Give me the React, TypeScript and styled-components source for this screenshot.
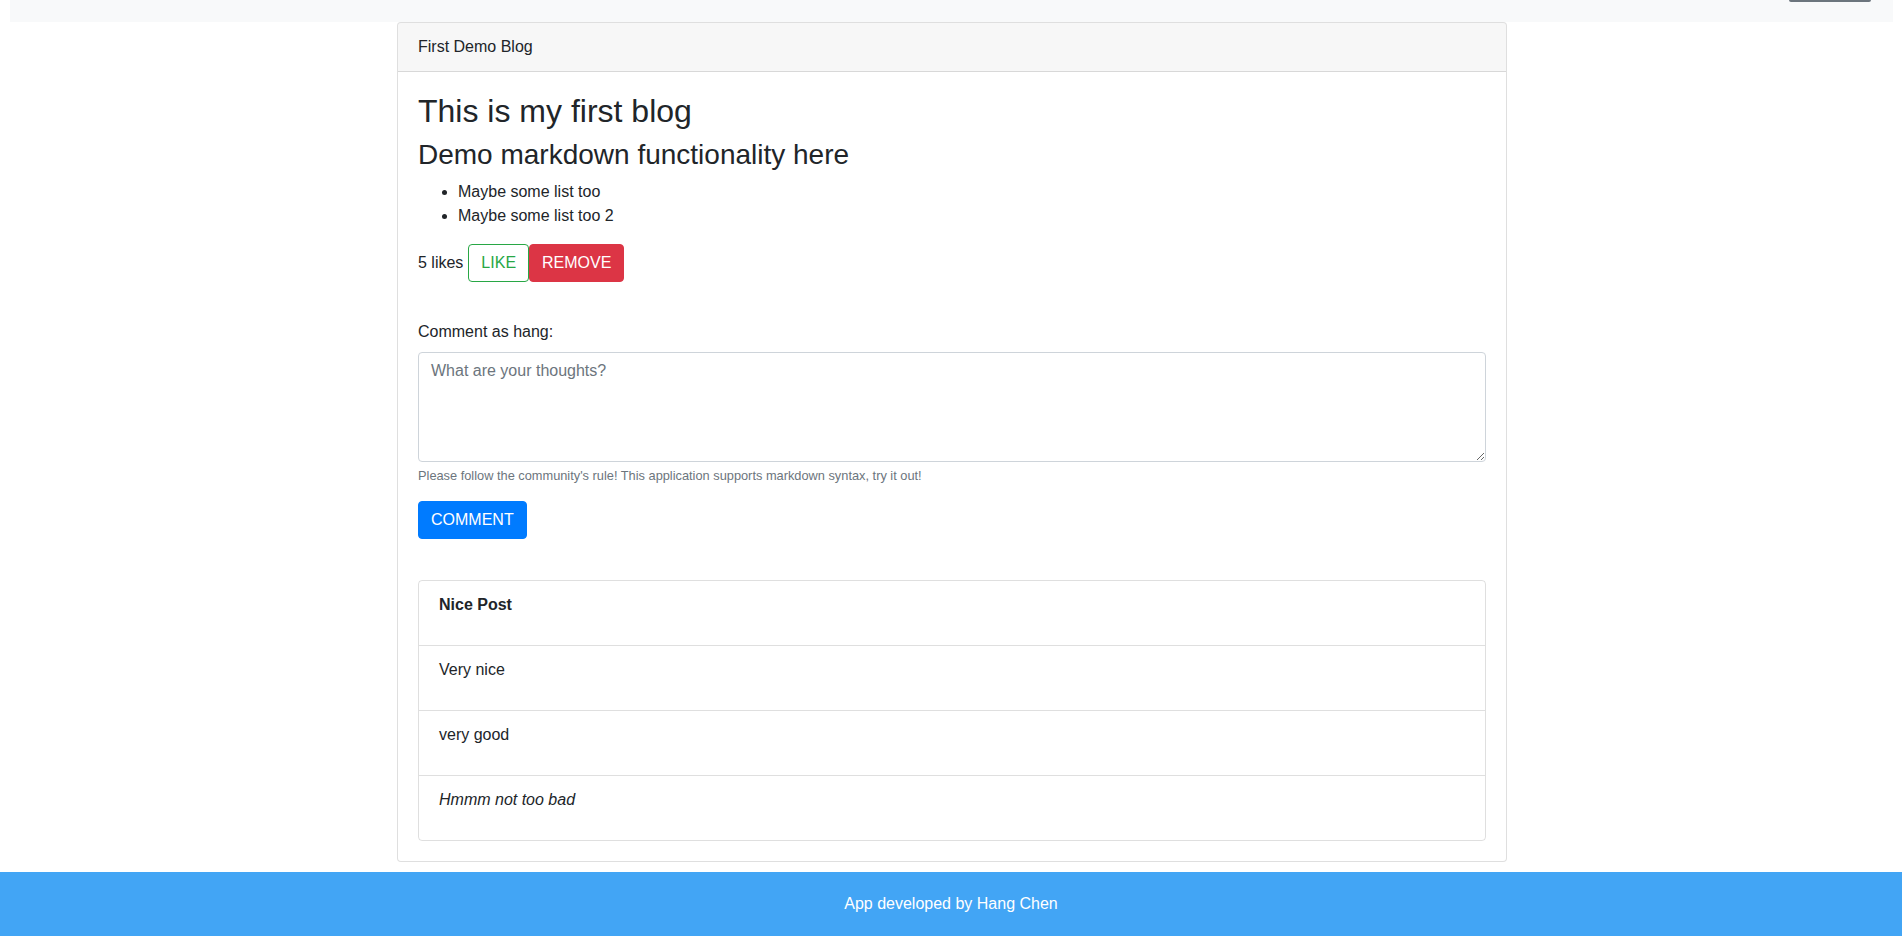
import React from "react";
import styled, { createGlobalStyle, css } from "styled-components";

const GlobalStyle = createGlobalStyle`
  *, *::before, *::after { box-sizing: border-box; }
  html, body { margin: 0; padding: 0; }
  body {
    font-family: "Liberation Sans", Arial, Helvetica, sans-serif;
    font-size: 16px;
    line-height: 1.5;
    color: #212529;
    background: #fff;
  }
`;

const Page = styled.div`
  min-height: 100vh;
  display: flex;
  flex-direction: column;
`;

const Main = styled.main`
  padding: 0 8px 0 10px;
`;

const TopBar = styled.div`
  height: 22px;
  background: #f8f9fa;
  margin-right: 1px;
  display: flex;
  justify-content: flex-end;
  align-items: flex-start;
  padding-right: 22px;
`;

const NavButtonEdge = styled.div`
  width: 82px;
  height: 2px;
  background: #6c757d;
  border-radius: 0 0 3px 3px;
`;

const Container = styled.div`
  width: 1110px;
  margin: 0 auto;
`;

const Card = styled.section`
  border: 1px solid rgba(0, 0, 0, 0.125);
  border-radius: 4px;
  background: #fff;
  overflow: hidden;
`;

const CardHeader = styled.header`
  padding: 12px 20px;
  background: rgba(0, 0, 0, 0.03);
  border-bottom: 1px solid rgba(0, 0, 0, 0.125);
  font-size: 16px;
  line-height: 24px;
`;

const CardBody = styled.div`
  padding: 20px;
`;

const Title = styled.h2`
  margin: 0 0 8px;
  font-size: 32px;
  font-weight: 500;
  line-height: 1.2;
`;

const Subtitle = styled.h3`
  margin: 0 0 8px;
  font-size: 28px;
  font-weight: 500;
  line-height: 1.2;
`;

const List = styled.ul`
  margin: 0 0 16px;
  padding-left: 40px;
`;

const LikeRow = styled.div`
  display: flex;
  align-items: center;
`;

const LikeCount = styled.span`
  margin-right: 5px;
`;

const Button = styled.button<{ $variant: "outline-success" | "danger" | "primary" }>`
  display: inline-block;
  font-family: inherit;
  font-size: 16px;
  line-height: 24px;
  padding: 6px 12px;
  border-radius: 4px;
  border: 1px solid transparent;
  cursor: pointer;
  ${({ $variant }) =>
    $variant === "outline-success"
      ? css`
          color: #28a745;
          background: transparent;
          border-color: #28a745;
        `
      : $variant === "danger"
      ? css`
          color: #fff;
          background: #dc3545;
          border-color: #dc3545;
        `
      : css`
          color: #fff;
          background: #007bff;
          border-color: #007bff;
        `}
`;

const CommentForm = styled.form`
  margin-top: 38px;
`;

const Label = styled.label`
  display: block;
  margin-bottom: 8px;
`;

const TextArea = styled.textarea`
  display: block;
  width: 100%;
  height: 110px;
  padding: 6px 12px;
  font-family: inherit;
  font-size: 16px;
  line-height: 1.5;
  color: #495057;
  border: 1px solid #ced4da;
  border-radius: 4px;
  resize: vertical;
  &::placeholder { color: #6c757d; }
`;

const HelpText = styled.small`
  display: block;
  margin-top: 4px;
  margin-bottom: 16px;
  font-size: 12.8px;
  line-height: 1.5;
  color: #6c757d;
`;

const CommentList = styled.ul`
  list-style: none;
  margin: 41px 0 0;
  padding: 0;
  border: 1px solid rgba(0, 0, 0, 0.125);
  border-radius: 4px;
`;

const CommentItem = styled.li`
  padding: 12px 20px;
  & + & { border-top: 1px solid rgba(0, 0, 0, 0.125); }
  p { margin: 0 0 16px; }
`;

const Footer = styled.footer`
  margin-top: auto;
  height: 64px;
  background: #42a5f5;
  color: #fff;
  display: flex;
  align-items: center;
  justify-content: center;
  font-size: 16px;
`;

export default function App() {
  return (
    <Page>
      <GlobalStyle />
      <Main>
        <TopBar>
          <NavButtonEdge />
        </TopBar>
        <Container>
          <Card>
            <CardHeader>First Demo Blog</CardHeader>
            <CardBody>
              <Title>This is my first blog</Title>
              <Subtitle>Demo markdown functionality here</Subtitle>
              <List>
                <li>Maybe some list too</li>
                <li>Maybe some list too 2</li>
              </List>
              <LikeRow>
                <LikeCount>5 likes</LikeCount>
                <Button type="button" $variant="outline-success">LIKE</Button>
                <Button type="button" $variant="danger">REMOVE</Button>
              </LikeRow>
              <CommentForm onSubmit={(e) => e.preventDefault()}>
                <Label htmlFor="comment">Comment as hang:</Label>
                <TextArea id="comment" placeholder="What are your thoughts?" />
                <HelpText>
                  Please follow the community's rule! This application supports markdown syntax, try it out!
                </HelpText>
                <Button type="submit" $variant="primary">COMMENT</Button>
              </CommentForm>
              <CommentList>
                <CommentItem><p><strong>Nice Post</strong></p></CommentItem>
                <CommentItem><p>Very nice</p></CommentItem>
                <CommentItem><p>very good</p></CommentItem>
                <CommentItem><p><em>Hmmm not too bad</em></p></CommentItem>
              </CommentList>
            </CardBody>
          </Card>
        </Container>
      </Main>
      <Footer>App developed by Hang Chen</Footer>
    </Page>
  );
}
